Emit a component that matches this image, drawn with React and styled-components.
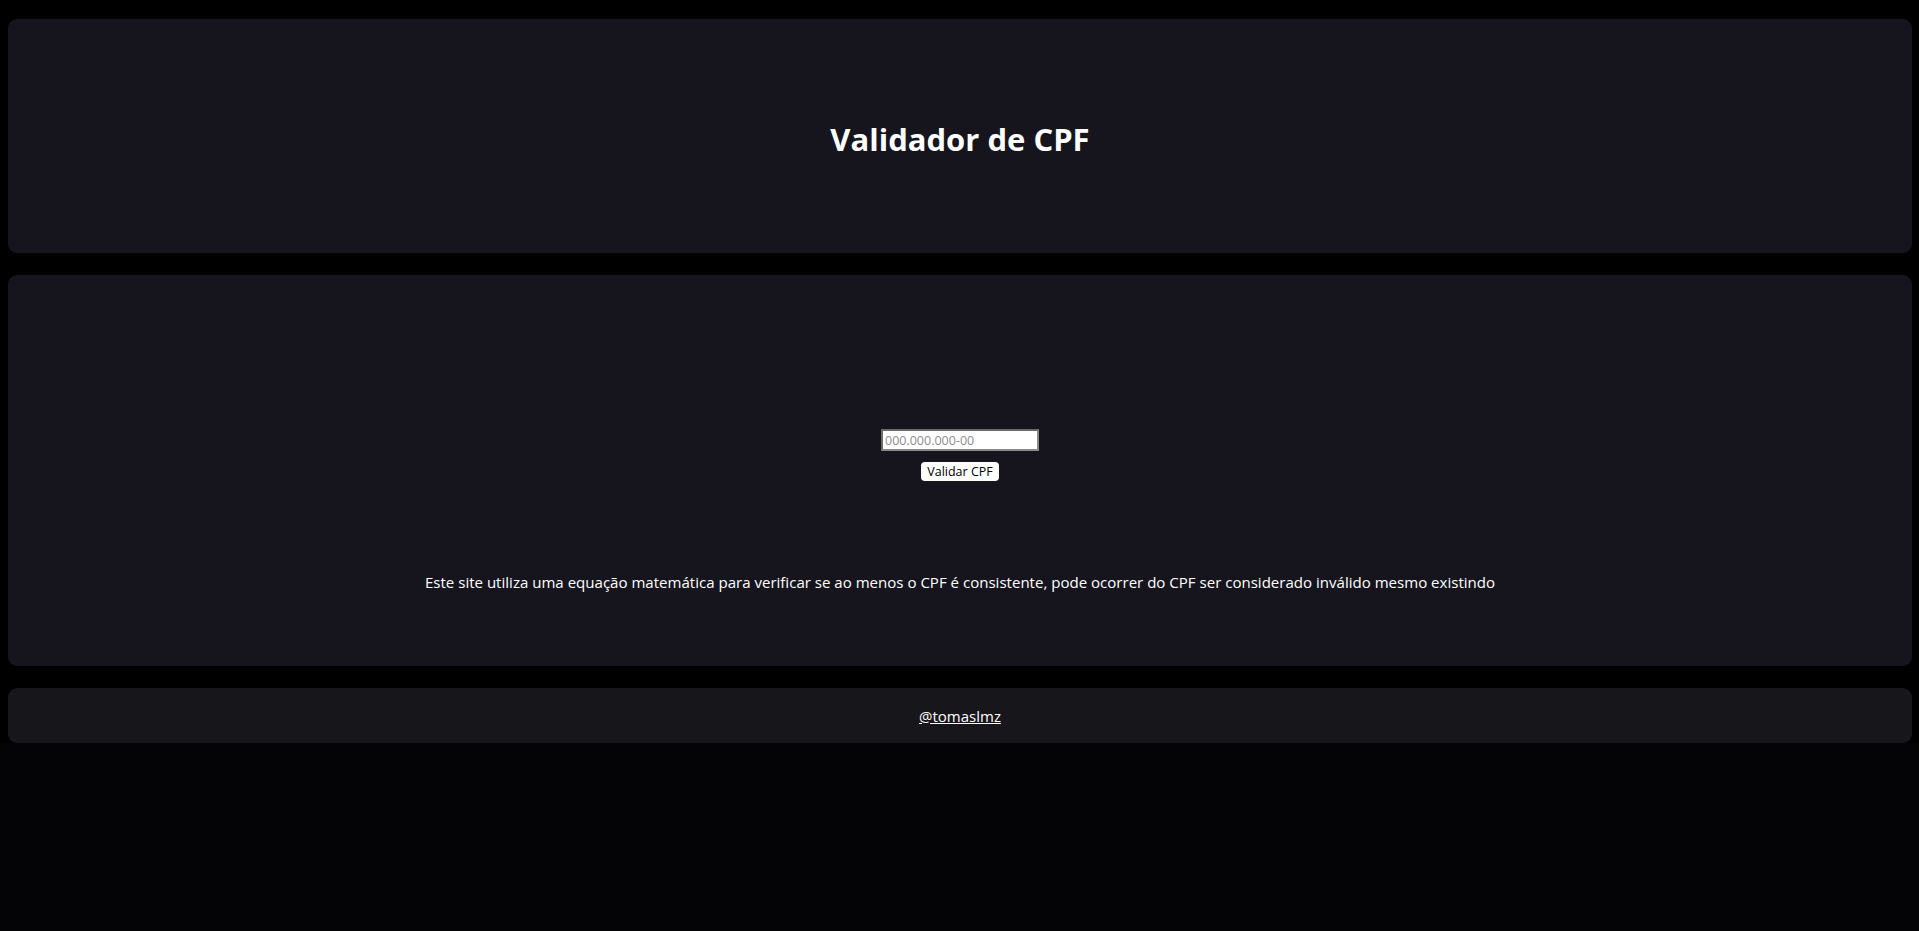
import React from "react";
import styled, { createGlobalStyle } from "styled-components";

// Global reset: dark page, default font for the whole app
const GlobalStyle = createGlobalStyle`
  html, body {
    margin: 0;
    background-color: #040306;
    font-family: "Open Sans", "Noto Sans", sans-serif;
    color: #fff;
  }
`;

const Page = styled.div`
  background-color: #000;
  padding: 19px 7px 0 8px;
  display: flex;
  flex-direction: column;
  gap: 22px;
`;

const Card = styled.section`
  background-color: ${(p) => p.$bg || "#16151e"};
  border-radius: 9px;
  display: flex;
  flex-direction: column;
  align-items: center;
  box-sizing: border-box;
  height: ${(p) => p.$height}px;
`;

const Header = styled(Card)`
  justify-content: center;
  padding-top: 6px;
`;

const Title = styled.h1`
  margin: 0;
  font-size: 31px;
  font-weight: 700;
  color: #fff;
`;

const Main = styled(Card)`
  padding-top: 154px;
`;

const Form = styled.form`
  display: flex;
  flex-direction: column;
  align-items: center;
  gap: 11px;
`;

const CpfInput = styled.input`
  width: 158px;
  height: 22px;
  box-sizing: border-box;
  border: 2px solid;
  border-color: #6b6b6b #8a8a8a #8a8a8a #6b6b6b;
  padding: 1px 2px;
  font-family: "Open Sans", sans-serif;
  font-size: 12.5px;
  background: #fff;
  color: #000;

  &::placeholder {
    color: #8d8d8d;
  }
`;

const SubmitButton = styled.button`
  background: #fff;
  color: #000;
  border: none;
  border-radius: 4px;
  height: 19px;
  padding: 0 6px;
  font-family: "Open Sans", sans-serif;
  font-size: 12.5px;
  cursor: pointer;
`;

const Notice = styled.p`
  margin: 91px 0 0;
  font-size: 15.05px;
  line-height: 21px;
  color: #fff;
`;

const Footer = styled(Card)`
  justify-content: center;
`;

const Handle = styled.a`
  color: #fff;
  font-size: 15px;
  text-decoration: underline;
`;

export default function App() {
  return (
    <>
      <GlobalStyle />
      <Page>
        <Header $height={234}>
          <Title>Validador de CPF</Title>
        </Header>

        <Main $height={391}>
          <Form onSubmit={(e) => e.preventDefault()}>
            <CpfInput type="text" placeholder="000.000.000-00" />
            <SubmitButton type="submit">Validar CPF</SubmitButton>
          </Form>
          <Notice>
            Este site utiliza uma equação matemática para verificar se ao menos o CPF é consistente, pode ocorrer do CPF ser considerado inválido mesmo existindo
          </Notice>
        </Main>

        <Footer $height={55} $bg="#17161b">
          <Handle href="#">@tomaslmz</Handle>
        </Footer>
      </Page>
    </>
  );
}
